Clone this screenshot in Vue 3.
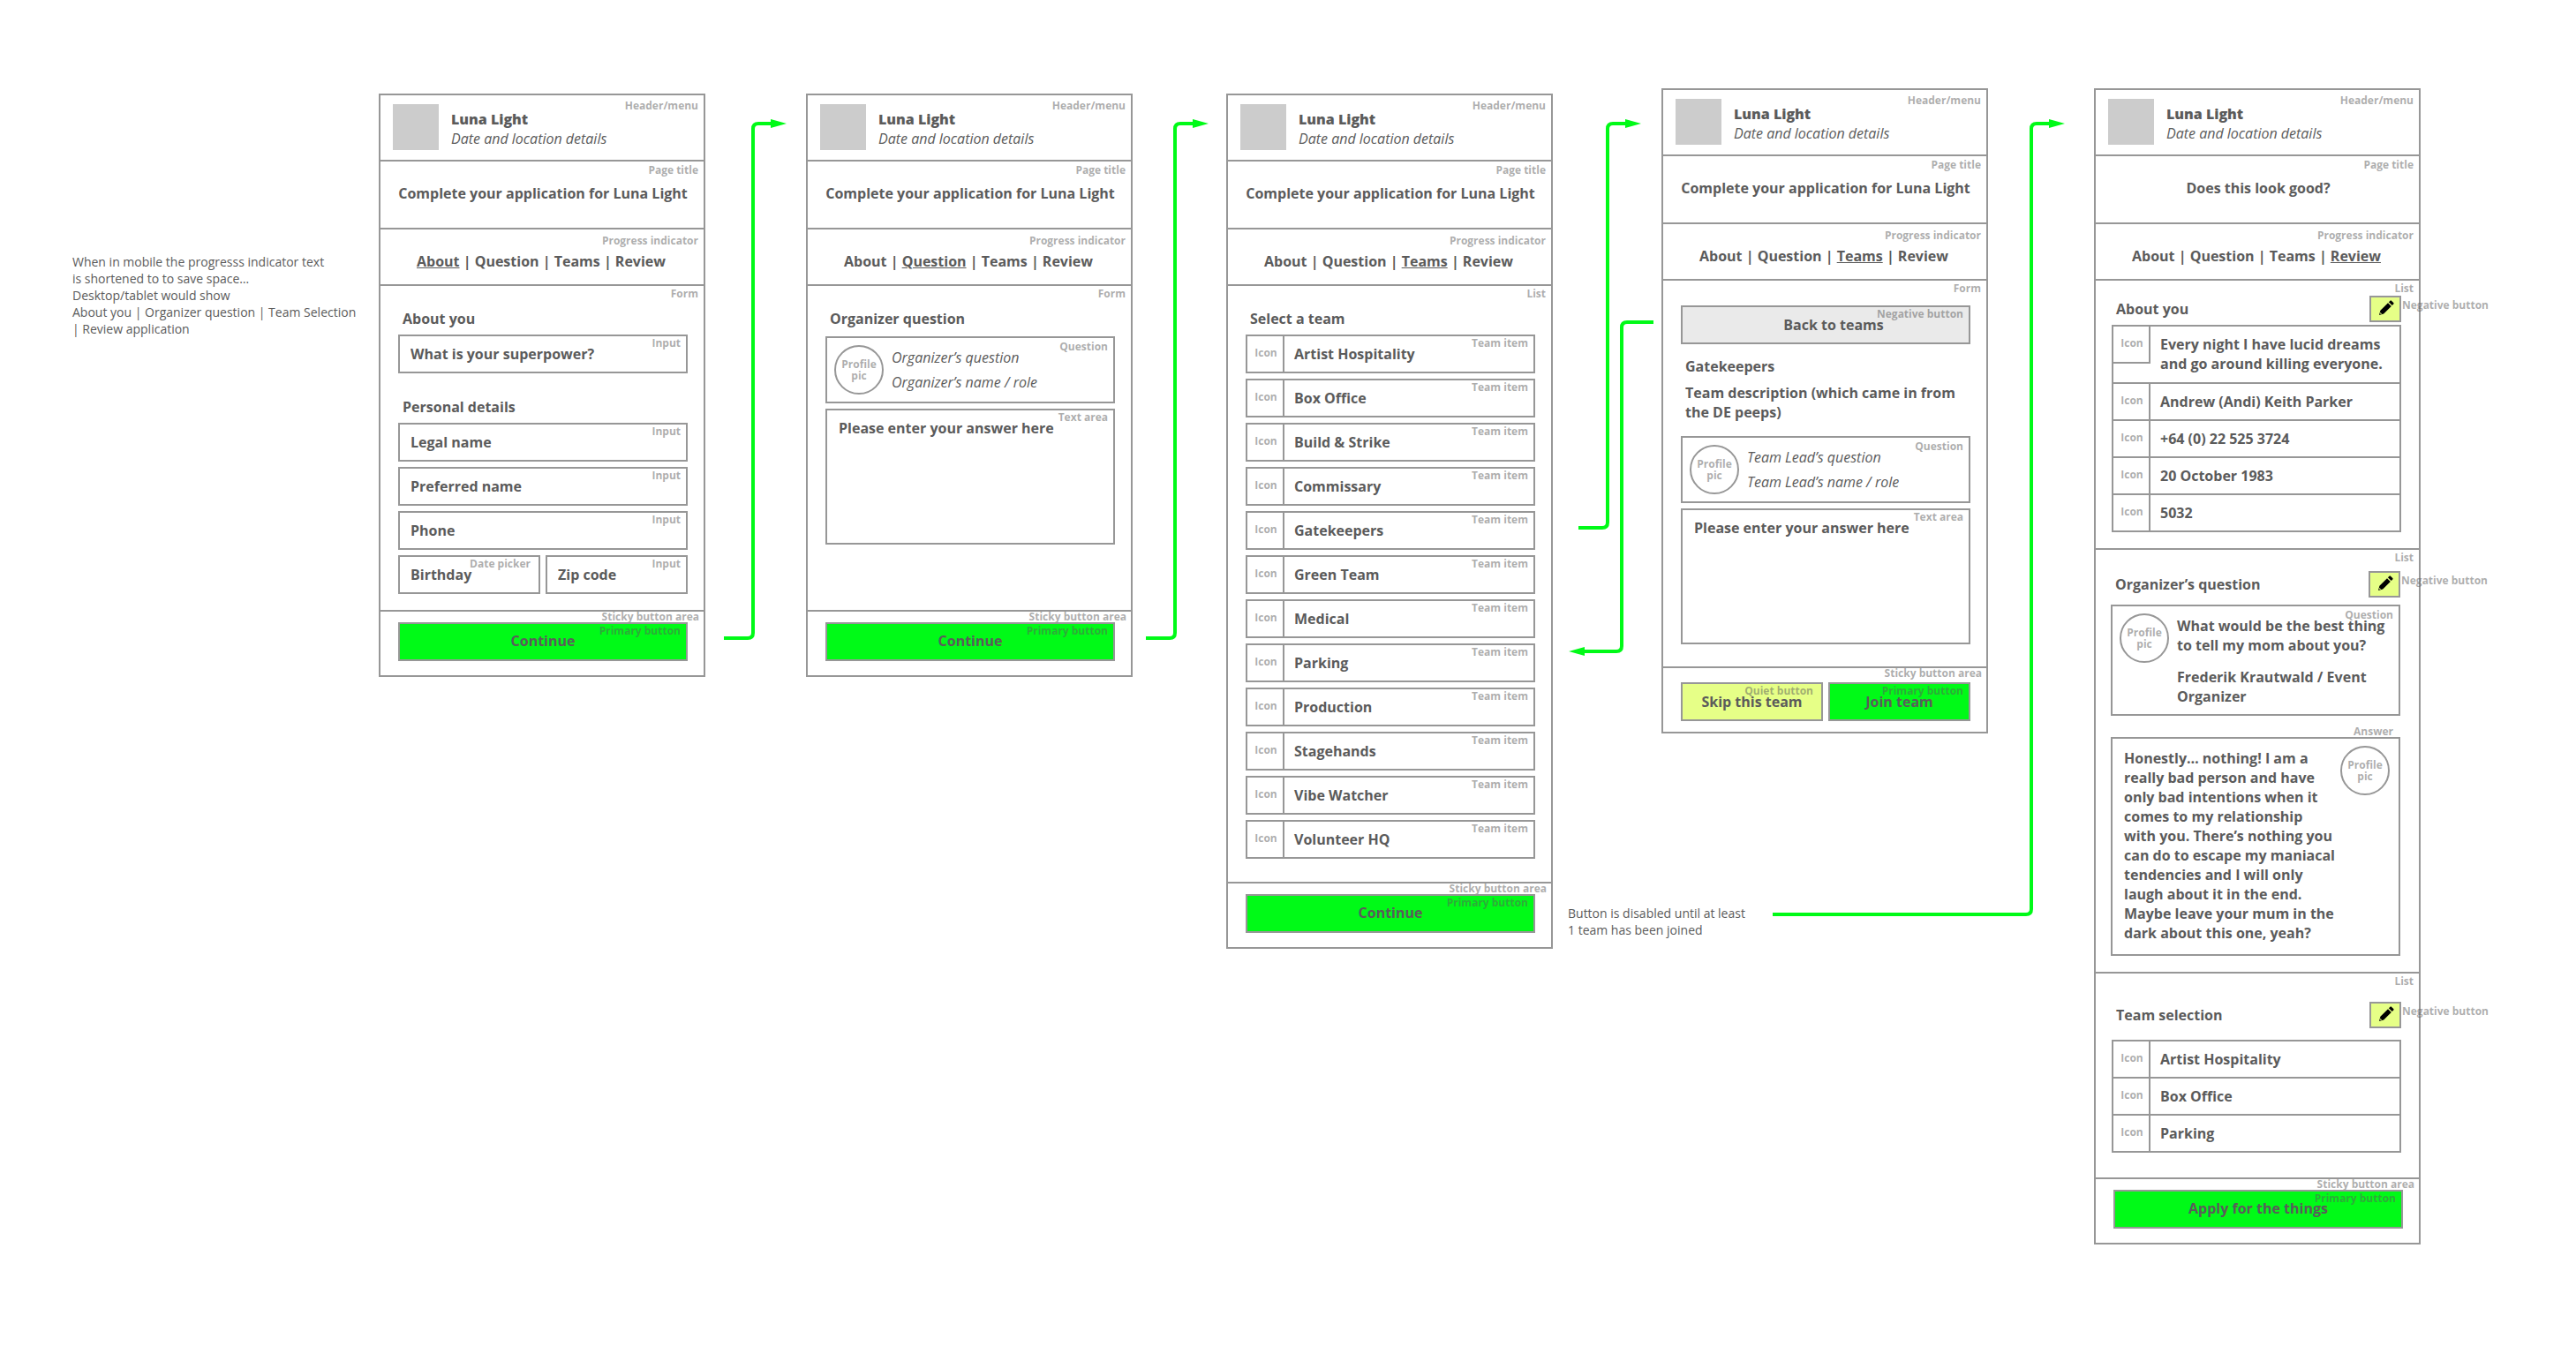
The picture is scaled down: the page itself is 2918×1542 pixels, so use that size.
<script setup>
const steps = ['About', 'Question', 'Teams', 'Review']

const teams = [
  'Artist Hospitality', 'Box Office', 'Build & Strike', 'Commissary',
  'Gatekeepers', 'Green Team', 'Medical', 'Parking',
  'Production', 'Stagehands', 'Vibe Watcher', 'Volunteer HQ',
]

const frames = [
  { id: 'about', x: 429, y: 106, title: 'Complete your application for Luna Light', step: 'About' },
  { id: 'question', x: 913, y: 106, title: 'Complete your application for Luna Light', step: 'Question' },
  { id: 'teams', x: 1389, y: 106, title: 'Complete your application for Luna Light', step: 'Teams' },
  { id: 'team', x: 1882, y: 100, title: 'Complete your application for Luna Light', step: 'Teams' },
  { id: 'review', x: 2372, y: 100, title: 'Does this look good?', step: 'Review' },
]

const notes = [
  {
    x: 82,
    y: 287,
    text: 'When in mobile the progresss indicator text\nis shortened to to save space…\nDesktop/tablet would show\nAbout you | Organizer question | Team Selection\n| Review application',
  },
  { x: 1776, y: 1025, text: 'Button is disabled until at least\n1 team has been joined' },
]

const connectors = [
  { line: 'M820 723H847Q853 723 853 717V146Q853 140 859 140H875', head: '873,135 891,140 873,145' },
  { line: 'M1298 723H1325Q1331 723 1331 717V146Q1331 140 1337 140H1353', head: '1351,135 1369,140 1351,145' },
  { line: 'M1788 598H1815Q1821 598 1821 592V146Q1821 140 1827 140H1843', head: '1841,135 1859,140 1841,145' },
  { line: 'M1873 365H1843Q1837 365 1837 371V732Q1837 738 1831 738H1793', head: '1795,733 1777,738 1795,743' },
  { line: 'M2008 1036H2295Q2301 1036 2301 1030V146Q2301 140 2307 140H2323', head: '2321,135 2339,140 2321,145' },
]

const aboutRows = [
  'Every night I have lucid dreams\nand go around killing everyone.',
  'Andrew (Andi) Keith Parker',
  '+64 (0) 22 525 3724',
  '20 October 1983',
  '5032',
]

const chosenTeams = ['Artist Hospitality', 'Box Office', 'Parking']

const reviewSections = [
  { id: 'you', title: 'About you', rows: aboutRows },
  { id: 'reply', title: 'Organizer’s question' },
  { id: 'selection', title: 'Team selection', rows: chosenTeams },
]

const answer = `Honestly… nothing! I am a
really bad person and have
only bad intentions when it
comes to my relationship
with you. There’s nothing you
can do to escape my maniacal
tendencies and I will only
laugh about it in the end.
Maybe leave your mum in the
dark about this one, yeah?`

const footerButtons = {
  about: 'Continue',
  question: 'Continue',
  teams: 'Continue',
  review: 'Apply for the things',
}

const place = (item) => ({ left: item.x + 'px', top: item.y + 'px' })
</script>

<template>
  <main class="canvas">
    <svg class="connectors" aria-hidden="true">
      <g v-for="c in connectors" :key="c.line">
        <path :d="c.line" />
        <polygon :points="c.head" />
      </g>
    </svg>

    <p v-for="n in notes" :key="n.x" class="note" :style="place(n)">{{ n.text }}</p>

    <article v-for="f in frames" :key="f.id" class="frame" :class="f.id" :style="place(f)">
      <header class="section header">
        <span class="tag">Header/menu</span>
        <div class="logo"></div>
        <div class="event">
          <strong>Luna Light</strong>
          <em>Date and location details</em>
        </div>
      </header>

      <section class="section title">
        <span class="tag">Page title</span>
        <h1>{{ f.title }}</h1>
      </section>

      <nav class="section progress" aria-label="Progress">
        <span class="tag">Progress indicator</span>
        <template v-for="(s, i) in steps" :key="s">
          <span v-if="i"> | </span>
          <a href="#" :class="{ current: s === f.step }">{{ s }}</a>
        </template>
      </nav>

      <form v-if="f.id === 'about'" class="section body" @submit.prevent>
        <span class="tag">Form</span>
        <h2>About you</h2>
        <div class="fields">
          <div class="field">
            <input type="text" placeholder="What is your superpower?" aria-label="What is your superpower?" />
            <span class="tag">Input</span>
          </div>
        </div>
        <h2>Personal details</h2>
        <div class="fields">
          <div v-for="label in ['Legal name', 'Preferred name', 'Phone']" :key="label" class="field">
            <input type="text" :placeholder="label" :aria-label="label" />
            <span class="tag">Input</span>
          </div>
          <div class="pair">
            <div class="field">
              <input type="text" placeholder="Birthday" aria-label="Birthday" />
              <span class="tag inset">Date picker</span>
            </div>
            <div class="field">
              <input type="text" placeholder="Zip code" aria-label="Zip code" />
              <span class="tag">Input</span>
            </div>
          </div>
        </div>
      </form>

      <form v-else-if="f.id === 'question'" class="section body" @submit.prevent>
        <span class="tag">Form</span>
        <h2>Organizer question</h2>
        <div class="fields">
          <div class="card">
            <span class="tag">Question</span>
            <span class="avatar">Profile<br />pic</span>
            <div class="prompt">
              <em>Organizer’s question</em>
              <em>Organizer’s name / role</em>
            </div>
          </div>
          <div class="field">
            <textarea placeholder="Please enter your answer here" aria-label="Your answer"></textarea>
            <span class="tag">Text area</span>
          </div>
        </div>
      </form>

      <section v-else-if="f.id === 'teams'" class="section body">
        <span class="tag">List</span>
        <h2>Select a team</h2>
        <div class="fields">
          <a v-for="t in teams" :key="t" class="row item" href="#">
            <span class="icon">Icon</span>
            <span class="value">{{ t }}</span>
            <span class="tag">Team item</span>
          </a>
        </div>
      </section>

      <form v-else-if="f.id === 'team'" class="section body" @submit.prevent>
        <span class="tag">Form</span>
        <div class="field">
          <button type="button" class="btn negative">Back to teams</button>
          <span class="tag">Negative button</span>
        </div>
        <h2>Gatekeepers</h2>
        <p class="description">Team description (which came in from the DE peeps)</p>
        <div class="fields">
          <div class="card">
            <span class="tag">Question</span>
            <span class="avatar">Profile<br />pic</span>
            <div class="prompt">
              <em>Team Lead’s question</em>
              <em>Team Lead’s name / role</em>
            </div>
          </div>
          <div class="field">
            <textarea placeholder="Please enter your answer here" aria-label="Your answer"></textarea>
            <span class="tag">Text area</span>
          </div>
        </div>
      </form>

      <template v-else>
        <section v-for="s in reviewSections" :key="s.id" class="section body" :class="s.id">
          <span class="tag">List</span>
          <div class="heading">
            <h2>{{ s.title }}</h2>
            <button type="button" class="edit" :aria-label="'Edit ' + s.title">
              <svg viewBox="0 0 17 17" width="17" height="17" aria-hidden="true">
                <path d="M0 17 1.4 11.8 10 3.2 13.8 7 5.2 15.6ZM1.4 14 1 15.1 1.9 16 3.1 15.6Z" fill-rule="evenodd" />
                <path d="M10.9 2.3 12.5.7Q13.2 0 13.9.7L16.3 3.1Q17 3.8 16.3 4.5L14.7 6.1Z" />
              </svg>
            </button>
            <span class="tag beside">Negative button</span>
          </div>

          <ul v-if="s.rows" class="table">
            <li v-for="(r, i) in s.rows" :key="r" class="row" :class="{ tall: s.id === 'you' && i === 0 }">
              <span class="icon">Icon</span>
              <span class="value">{{ r }}</span>
            </li>
          </ul>

          <template v-else>
            <div class="card">
              <span class="tag">Question</span>
              <span class="avatar">Profile<br />pic</span>
              <div class="prompt spoken">
                <p>What would be the best thing to tell my mom about you?</p>
                <p>Frederik Krautwald / Event Organizer</p>
              </div>
            </div>
            <div class="answer">
              <span class="tag above">Answer</span>
              <p>{{ answer }}</p>
              <span class="avatar">Profile<br />pic</span>
            </div>
          </template>
        </section>
      </template>

      <footer class="sticky">
        <span class="tag">Sticky button area</span>
        <div v-if="f.id === 'team'" class="pair">
          <div class="field">
            <button type="button" class="btn quiet">Skip this team</button>
            <span class="tag inset">Quiet button</span>
          </div>
          <div class="field">
            <button type="button" class="btn primary">Join team</button>
            <span class="tag">Primary button</span>
          </div>
        </div>
        <div v-else class="field">
          <button type="button" class="btn primary wide">{{ footerButtons[f.id] }}</button>
          <span class="tag">Primary button</span>
        </div>
      </footer>
    </article>
  </main>
</template>

<style>
body {
  margin: 0;
  background: #fff;
}
</style>

<style scoped>
.canvas {
  --line: #979797;
  --ink: #5b5b5b;
  --faint: rgba(91, 91, 91, 0.5);
  position: relative;
  min-height: 100vh;
  color: var(--ink);
  font: 700 16px/22px "Open Sans", sans-serif;
}

.canvas * {
  box-sizing: border-box;
}

h1,
h2,
p,
ul {
  margin: 0;
  padding: 0;
  font: inherit;
}

a {
  color: inherit;
  text-decoration: none;
}

em {
  font-weight: 400;
}

.connectors {
  position: absolute;
  inset: 0;
  width: 100%;
  height: 100%;
}

.connectors path {
  fill: none;
  stroke: #00fa17;
  stroke-width: 4;
}

.connectors polygon {
  fill: #00fa17;
}

.note {
  position: absolute;
  font-size: 14px;
  font-weight: 400;
  line-height: 19px;
  white-space: pre;
}

.frame {
  position: absolute;
  width: 370px;
  border: 2px solid var(--line);
}

.section {
  position: relative;
  border-bottom: 2px solid var(--line);
}

/* Annotation naming the component it sits on */
.tag {
  position: absolute;
  top: 0;
  right: 6px;
  color: var(--faint);
  font-size: 12px;
  line-height: 18px;
  white-space: nowrap;
  pointer-events: none;
}

.header {
  display: flex;
  gap: 14px;
  padding: 10px 14px 11px;
}

.header .tag {
  top: 3px;
}

.logo {
  width: 52px;
  height: 52px;
  background: #ccc;
}

.event {
  display: flex;
  flex-direction: column;
  padding-top: 6px;
}

.title {
  padding: 25px 0 28px 2px;
  text-align: center;
}

.title .tag {
  top: 1px;
}

.progress {
  padding: 25px 2px 15px 0;
  text-align: center;
}

.progress .tag {
  top: 4px;
}

.progress .current {
  text-decoration: underline;
}

.body {
  padding: 26px 18px 18px 20px;
}

h2,
.description {
  padding-left: 5px;
}

.fields {
  display: flex;
  flex-direction: column;
  gap: 6px;
  margin-top: 7px;
}

.fields + h2 {
  margin-top: 27px;
}

.pair {
  display: grid;
  grid-template-columns: 1fr 1fr;
  gap: 6px;
}

.field {
  position: relative;
  display: flex;
}

.field .tag {
  top: 1px;
  right: 8px;
}

.field .tag.inset {
  right: 11px;
}

input,
textarea,
.btn {
  width: 100%;
  height: 44px;
  margin: 0;
  padding: 0 12px;
  border: 2px solid var(--line);
  border-radius: 0;
  background: none;
  color: inherit;
  font: inherit;
}

textarea {
  height: 154px;
  padding: 9px 13px;
  resize: none;
}

::placeholder {
  color: var(--ink);
  opacity: 1;
}

.btn {
  padding: 0;
}

.btn.primary {
  background: #00fa17;
}

.btn.wide {
  padding-bottom: 2px;
}

.btn.quiet {
  background: #e6ff87;
}

.btn.negative {
  padding-left: 18px;
  background: #eaeaea;
}

.row {
  position: relative;
  display: flex;
  align-items: flex-start;
}

.item {
  border: 2px solid var(--line);
}

.item .tag {
  top: -1px;
}

.icon {
  flex: none;
  width: 42px;
  height: 40px;
  padding: 10px 0 0 2px;
  border-right: 2px solid var(--line);
  color: var(--faint);
  font-size: 12px;
  line-height: 18px;
  text-align: center;
}

.value {
  padding: 9px 0 9px 11px;
  white-space: pre-line;
}

.question .body {
  padding-bottom: 74px;
}

.question .fields {
  margin-top: 9px;
}

.teams .body {
  padding-bottom: 26px;
}

.team .body {
  padding-top: 28px;
  padding-bottom: 25px;
}

.team h2 {
  margin-top: 14px;
}

.description {
  margin-top: 8px;
}

.team .fields {
  margin-top: 16px;
}

.card {
  position: relative;
  display: flex;
  align-items: flex-start;
  gap: 9px;
  padding: 8px;
  border: 2px solid var(--line);
}

.card .tag {
  top: 1px;
}

.avatar {
  display: flex;
  flex: none;
  align-items: center;
  justify-content: center;
  width: 56px;
  height: 56px;
  border: 2px solid var(--line);
  border-radius: 50%;
  color: var(--faint);
  font-size: 12px;
  line-height: 13px;
  text-align: center;
}

.prompt {
  display: flex;
  flex-direction: column;
  gap: 6px;
  padding: 3px 0 1px;
}

.prompt.spoken {
  gap: 14px;
}

.review .body {
  padding-right: 20px;
  padding-left: 18px;
}

.review .you {
  padding-top: 17px;
}

.review .reply {
  padding: 24px 21px 18px 17px;
}

.review .selection {
  padding-top: 32px;
  padding-bottom: 28px;
}

.heading {
  position: relative;
  display: flex;
  align-items: center;
  justify-content: space-between;
  margin-bottom: 3px;
}

.reply .heading {
  margin-bottom: 8px;
}

.selection .heading {
  margin-bottom: 13px;
}

.edit {
  display: flex;
  justify-content: center;
  width: 36px;
  height: 30px;
  padding: 3px 0 0 2px;
  border: 2px solid var(--line);
  border-radius: 0;
  background: #e6ff87;
}

.edit svg {
  fill: #000;
}

.heading .tag.beside {
  top: 2px;
  right: auto;
  left: calc(100% + 1px);
}

.table {
  border: 2px solid var(--line);
  list-style: none;
}

.table .row + .row {
  border-top: 2px solid var(--line);
}

.tall .icon {
  height: 42px;
  border-bottom: 2px solid var(--line);
}

.tall .value {
  padding-bottom: 10px;
}

.answer {
  position: relative;
  display: flex;
  justify-content: space-between;
  margin-top: 24px;
  padding: 8px 10px 13px 13px;
  border: 2px solid var(--line);
}

.answer p {
  padding-top: 3px;
  white-space: pre;
}

.answer .tag.above {
  top: -17px;
}

.sticky {
  position: relative;
  padding: 12px 18px 16px 20px;
}

.team .sticky {
  padding-top: 16px;
  padding-bottom: 12px;
}

.sticky > .tag {
  top: -3px;
  right: 5px;
}
</style>
